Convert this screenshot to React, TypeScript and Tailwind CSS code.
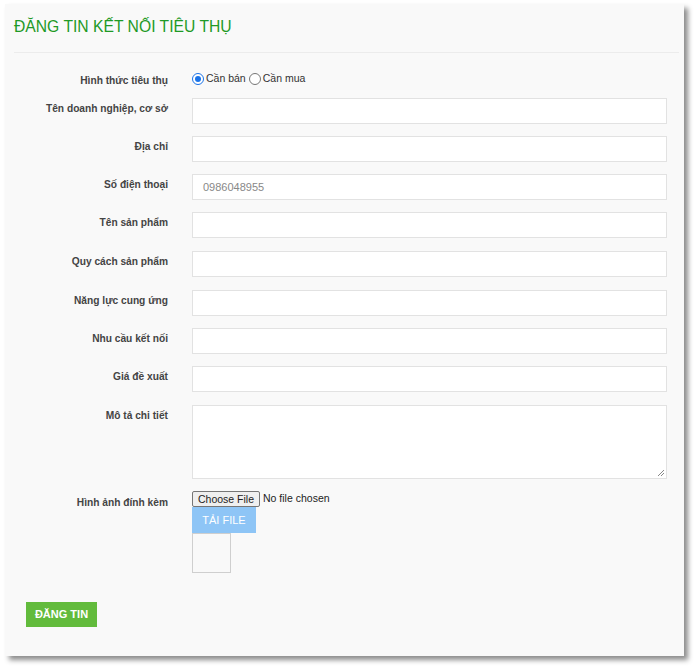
import React from "react";

const font = { fontFamily: '"Liberation Sans", Arial, sans-serif' };

function Label({ children }: { children: React.ReactNode }) {
  return (
    <div className="w-[163px] shrink-0 pt-[3px] text-right text-[10.2px] font-bold leading-[15px] text-[#444]">
      {children}
    </div>
  );
}

function InputRow({ label, mt, value }: { label: string; mt: string; value?: string }) {
  return (
    <div className={`flex ${mt}`}>
      <Label>{label}</Label>
      <div className="ml-[24px] flex h-[26px] w-[475px] items-center border border-[#e2e2e2] bg-white pl-[10px] text-[11px] text-[#888]">
        {value}
      </div>
    </div>
  );
}

export default function App() {
  return (
    <div className="h-[669px] w-[696px] bg-white pl-[5px] pt-[4px]" style={font}>
      <div className="flex h-[652px] w-[679px] flex-col bg-[#f9f9f9] pt-[12px] shadow-[4px_4px_5px_rgba(0,0,0,0.45)]">
        <div className="ml-[9px] h-[22px] text-[15.7px] leading-[22px] text-[#1f9a26]">
          ĐĂNG TIN KẾT NỐI TIÊU THỤ
        </div>
        <div className="ml-[9px] mr-[5px] mt-[14px] h-px bg-[#ececec]" />

        <div className="mt-[17px] flex h-[17px]">
          <Label>Hình thức tiêu thụ</Label>
          <div className="ml-[24px] flex items-center text-[10.5px] leading-[15px] text-[#333]">
            <span className="flex h-[12px] w-[12px] items-center justify-center rounded-full border border-[#1a73e8] bg-white">
              <span className="h-[6px] w-[6px] rounded-full bg-[#1a73e8]" />
            </span>
            <span className="ml-[2px]">Cần bán</span>
            <span className="ml-[3px] h-[12px] w-[12px] rounded-full border border-[#767676] bg-white" />
            <span className="ml-[2px]">Cần mua</span>
          </div>
        </div>

        <InputRow label="Tên doanh nghiệp, cơ sở" mt="mt-[11px]" />
        <InputRow label="Địa chỉ" mt="mt-[12px]" />
        <InputRow label="Số điện thoại" mt="mt-[12px]" value="0986048955" />
        <InputRow label="Tên sản phẩm" mt="mt-[12px]" />
        <InputRow label="Quy cách sản phẩm" mt="mt-[13px]" />
        <InputRow label="Năng lực cung ứng" mt="mt-[13px]" />
        <InputRow label="Nhu cầu kết nối" mt="mt-[12px]" />
        <InputRow label="Giá đề xuất" mt="mt-[12px]" />

        <div className="mt-[13px] flex">
          <Label>Mô tả chi tiết</Label>
          <div className="relative ml-[24px] h-[74px] w-[475px] border border-[#e2e2e2] bg-white">
            <svg className="absolute bottom-[1px] right-[1px]" width="8" height="8" viewBox="0 0 8 8">
              <line x1="7" y1="1" x2="1" y2="7" stroke="#888" strokeWidth="1" />
              <line x1="7" y1="4" x2="4" y2="7" stroke="#888" strokeWidth="1" />
            </svg>
          </div>
        </div>

        <div className="mt-[12px] flex">
          <div className="w-[163px] shrink-0 pt-[4px] text-right text-[10.2px] font-bold leading-[15px] text-[#444]">
            Hình ảnh đính kèm
          </div>
          <div className="ml-[24px] flex flex-col items-start">
            <div className="flex h-[16px] items-center text-[10.5px] text-[#222]">
              <span className="flex h-[16px] items-center rounded-[2px] border border-[#767676] bg-[#efefef] px-[5px] leading-none">
                Choose File
              </span>
              <span className="ml-[3px]">No file chosen</span>
            </div>
            <div className="flex h-[26px] w-[64px] items-center justify-center bg-[#8ec5f6] text-[11px] text-white">
              TẢI FILE
            </div>
            <div className="h-[40px] w-[39px] border border-[#cfcfcf]" />
          </div>
        </div>

        <div className="ml-[21px] mt-[29px] flex h-[25px] w-[71px] items-center justify-center bg-[#62bb3c] text-[11px] font-bold text-white">
          ĐĂNG TIN
        </div>
      </div>
    </div>
  );
}
